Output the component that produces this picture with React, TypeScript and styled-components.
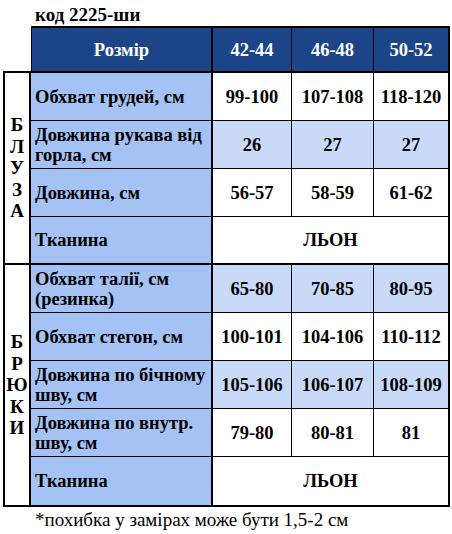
import React from "react";
import styled, { createGlobalStyle } from "styled-components";

const GlobalStyle = createGlobalStyle`
  html, body {
    margin: 0;
    padding: 0;
    background: #ffffff;
  }
  body {
    font-family: "Liberation Serif", "Times New Roman", serif;
    color: #000000;
  }
  * { box-sizing: border-box; }
`;

const HEADER_BG = "#1c4587";
const LABEL_BG = "#a4c2f4";
const SHADE_BG = "#c9daf8";
const CELL_FONT = "18.5px";

const Page = styled.div`
  padding: 5px 0 0 3px;
  width: 452px;
`;

const Title = styled.div`
  padding-left: 32px;
  font-weight: bold;
  font-size: 19px;
  line-height: 20px;
  height: 21px;
`;

const Grid = styled.div`
  display: grid;
  grid-template-columns: 28px 182px 79px 82px 76px;
  grid-template-rows: 47px repeat(4, 48px) repeat(4, 48px) 50px;
  width: 447px;
`;

const HeaderSpacer = styled.div`
  grid-column: 1;
  border-bottom: 2px solid #000;
`;

const HeaderCell = styled.div<{ $right: number; $first?: boolean }>`
  background: ${HEADER_BG};
  color: #ffffff;
  font-weight: bold;
  font-size: ${CELL_FONT};
  line-height: 20px;
  display: flex;
  align-items: center;
  justify-content: center;
  border-top: 2px solid #000;
  border-bottom: 2px solid #000;
  border-right: ${(p) => p.$right}px solid #000;
  border-left: ${(p) => (p.$first ? "1px solid #000" : "none")};
`;

const SideCell = styled.div<{ $span: number }>`
  grid-column: 1;
  grid-row: span ${(p) => p.$span};
  border-left: 2px solid #000;
  border-right: 2px solid #000;
  border-bottom: 2px solid #000;
  display: flex;
  flex-direction: column;
  align-items: center;
  justify-content: center;
  background: #ffffff;
`;

const SideLetter = styled.span`
  display: block;
  font-weight: bold;
  font-size: 19px;
  line-height: 21.5px;
`;

const LabelCell = styled.div<{ $bottom: number }>`
  grid-column: 2;
  background: ${LABEL_BG};
  border-right: 2px solid #000;
  border-bottom: ${(p) => p.$bottom}px solid #000;
  padding: 0 2px 0 4px;
  display: flex;
  flex-direction: column;
  justify-content: center;
  font-weight: bold;
  font-size: ${CELL_FONT};
  line-height: 20px;
  white-space: nowrap;
`;

const ValueCell = styled.div<{
  $bottom: number;
  $right: number;
  $shaded?: boolean;
  $span?: number;
}>`
  grid-column: ${(p) => (p.$span ? `3 / span ${p.$span}` : "auto")};
  background: ${(p) => (p.$shaded ? SHADE_BG : "#ffffff")};
  border-right: ${(p) => p.$right}px solid #000;
  border-bottom: ${(p) => p.$bottom}px solid #000;
  display: flex;
  align-items: center;
  justify-content: center;
  font-weight: bold;
  font-size: ${CELL_FONT};
  line-height: 20px;
  white-space: nowrap;
`;

const Footnote = styled.div`
  margin-top: 3px;
  padding-left: 32px;
  font-size: 19px;
  line-height: 20px;
`;

type Row = {
  label: string[];
  values?: string[];
  merged?: string;
  shaded?: boolean;
};

type Section = { name: string; rows: Row[] };

const sizes = ["42-44", "46-48", "50-52"];
const valueRight = [1, 1, 2];

const sections: Section[] = [
  {
    name: "БЛУЗА",
    rows: [
      { label: ["Обхват грудей, см"], values: ["99-100", "107-108", "118-120"] },
      {
        label: ["Довжина рукава від", "горла, см"],
        values: ["26", "27", "27"],
        shaded: true,
      },
      { label: ["Довжина, см"], values: ["56-57", "58-59", "61-62"] },
      { label: ["Тканина"], merged: "ЛЬОН" },
    ],
  },
  {
    name: "БРЮКИ",
    rows: [
      {
        label: ["Обхват талії, см", "(резинка)"],
        values: ["65-80", "70-85", "80-95"],
        shaded: true,
      },
      { label: ["Обхват стегон, см"], values: ["100-101", "104-106", "110-112"] },
      {
        label: ["Довжина по бічному", "шву, см"],
        values: ["105-106", "106-107", "108-109"],
        shaded: true,
      },
      {
        label: ["Довжина по внутр.", "шву, см"],
        values: ["79-80", "80-81", "81"],
      },
      { label: ["Тканина"], merged: "ЛЬОН" },
    ],
  },
];

export default function App() {
  return (
    <>
      <GlobalStyle />
      <Page>
        <Title>код 2225-ши</Title>
        <Grid>
          <HeaderSpacer />
          <HeaderCell $right={2} $first>
            Розмір
          </HeaderCell>
          {sizes.map((s, i) => (
            <HeaderCell key={s} $right={valueRight[i]}>
              {s}
            </HeaderCell>
          ))}
          {sections.map((sec) => (
            <React.Fragment key={sec.name}>
              <SideCell $span={sec.rows.length}>
                {sec.name.split("").map((ch, i) => (
                  <SideLetter key={i}>{ch}</SideLetter>
                ))}
              </SideCell>
              {sec.rows.map((row, ri) => {
                const bottom = ri === sec.rows.length - 1 ? 2 : 1;
                return (
                  <React.Fragment key={ri}>
                    <LabelCell $bottom={bottom}>
                      {row.label.map((l, li) => (
                        <span key={li}>{l}</span>
                      ))}
                    </LabelCell>
                    {row.merged ? (
                      <ValueCell $bottom={bottom} $right={2} $span={3}>
                        {row.merged}
                      </ValueCell>
                    ) : (
                      row.values!.map((v, vi) => (
                        <ValueCell
                          key={vi}
                          $bottom={bottom}
                          $right={valueRight[vi]}
                          $shaded={row.shaded}
                        >
                          {v}
                        </ValueCell>
                      ))
                    )}
                  </React.Fragment>
                );
              })}
            </React.Fragment>
          ))}
        </Grid>
        <Footnote>*похибка у замірах може бути 1,5-2 см</Footnote>
      </Page>
    </>
  );
}
